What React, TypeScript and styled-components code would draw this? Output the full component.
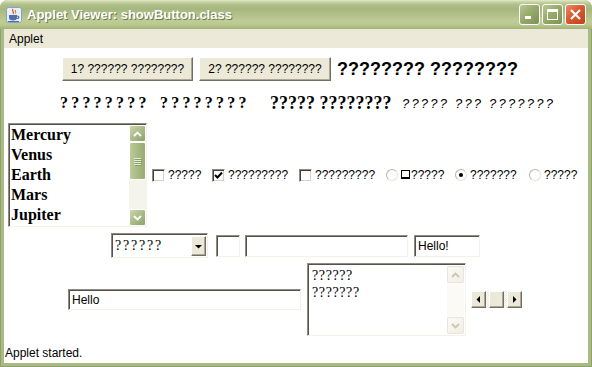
import React from "react";
import styled, { createGlobalStyle } from "styled-components";

const SANS = `"Liberation Sans", Arial, sans-serif`;
const SERIF = `"Liberation Serif", "Times New Roman", serif`;

const GlobalStyle = createGlobalStyle`
  html, body { margin: 0; padding: 0; background: #ffffff; }
  body { width: 592px; height: 367px; overflow: hidden; font-family: ${SANS}; }
  * { box-sizing: border-box; }
`;

const Window = styled.div`
  width: 592px;
  height: 367px;
  display: flex;
  flex-direction: column;
  background: #a8b983;
  border-radius: 8px 8px 0 0;
  overflow: hidden;
`;

const TitleBar = styled.div`
  height: 29px;
  flex: none;
  display: flex;
  align-items: center;
  padding: 0 6px 0 6px;
  background: linear-gradient(
    to bottom,
    #e4ebca 0px,
    #c6d2a2 2px,
    #aebe88 5px,
    #a6b77e 9px,
    #b1c18a 15px,
    #becc96 21px,
    #bac890 25px,
    #a0b277 29px
  );
`;

const TitleText = styled.span`
  margin-left: 5px;
  color: #ffffff;
  font: bold 13px ${SANS};
  text-shadow: 1px 1px 0 #6d7d4a;
  white-space: nowrap;
`;

const CaptionGroup = styled.div`
  margin-left: auto;
  display: flex;
  gap: 2px;
`;

const CaptionButton = styled.div<{ $close?: boolean }>`
  width: 21px;
  height: 21px;
  border: 1px solid #ffffff;
  border-radius: 3px;
  display: flex;
  align-items: center;
  justify-content: center;
  background: ${(p) =>
    p.$close
      ? "linear-gradient(135deg, #ec8a66 0%, #d8592f 45%, #c2431c 100%)"
      : "linear-gradient(135deg, #b8c794 0%, #98aa6d 45%, #7e9254 100%)"};
`;

const Frame = styled.div`
  flex: 1;
  display: flex;
  flex-direction: column;
  padding: 0 4px 4px 4px;
  background: #a9ba85;
  box-shadow: inset 1px 0 0 #8fa268, inset -1px 0 0 #8fa268, inset 0 -1px 0 #8fa268;
`;

const MenuBar = styled.div`
  height: 19px;
  flex: none;
  display: flex;
  align-items: center;
  padding-left: 5px;
  background: #ece9d8;
  font: 12px ${SANS};
  color: #000;
`;

const Content = styled.div`
  flex: 1;
  display: flex;
  flex-direction: column;
  background: #ffffff;
`;

const Row = styled.div<{ $top: number; $left: number; $h: number }>`
  display: flex;
  align-items: center;
  flex: none;
  margin-top: ${(p) => p.$top}px;
  padding-left: ${(p) => p.$left}px;
  height: ${(p) => p.$h}px;
`;

const PushButton = styled.div<{ $w: number; $ml?: number }>`
  width: ${(p) => p.$w}px;
  height: 24px;
  margin-left: ${(p) => p.$ml ?? 0}px;
  display: flex;
  align-items: center;
  justify-content: center;
  background: #ece9d8;
  border-style: solid;
  border-width: 1px;
  border-color: #ffffff #716f64 #716f64 #ffffff;
  box-shadow: inset -1px -1px 0 #aca899;
  font: 12px ${SANS};
  color: #000;
  white-space: nowrap;
`;

const BigLabel = styled.span<{ $ml: number }>`
  margin-left: ${(p) => p.$ml}px;
  font: bold 18px ${SANS};
  color: #000;
  white-space: nowrap;
`;

const SerifLabel = styled.span<{ $w: number; $spaced?: boolean }>`
  width: ${(p) => p.$w}px;
  flex: none;
  font: bold ${(p) => (p.$spaced ? 16 : 18)}px ${SERIF};
  letter-spacing: ${(p) => (p.$spaced ? 3.2 : 0)}px;
  color: #000;
  white-space: nowrap;
`;

const ItalicLabel = styled.span`
  font: italic 13px ${SANS};
  letter-spacing: 2.2px;
  color: #000;
  white-space: nowrap;
`;

const sunken = `
  border-style: solid;
  border-width: 1px;
  border-color: #8e8c80 #f3f1e8 #f3f1e8 #8e8c80;
  box-shadow: inset 1px 1px 0 #55534b;
  background: #ffffff;
`;

const ListBox = styled.div`
  width: 139px;
  height: 104px;
  flex: none;
  display: flex;
  ${sunken}
  padding: 1px 0 0 1px;
`;

const ListItems = styled.div`
  flex: 1;
  display: flex;
  flex-direction: column;
  padding-left: 1px;
`;

const ListItem = styled.div`
  height: 20px;
  font: bold 16px/20px ${SERIF};
  color: #000;
`;

const VScroll = styled.div`
  width: 17px;
  display: flex;
  flex-direction: column;
  background: #f5f4ea;
`;

const OliveButton = styled.div`
  width: 17px;
  height: 17px;
  flex: none;
  border: 1px solid #ffffff;
  border-radius: 2px;
  background: linear-gradient(135deg, #c9d5aa 0%, #a8b986 55%, #8ea266 100%);
  display: flex;
  align-items: center;
  justify-content: center;
`;

const VTrack = styled.div`
  flex: 1;
  display: flex;
  flex-direction: column;
`;

const OliveThumb = styled.div`
  height: 38px;
  border: 1px solid #ffffff;
  border-radius: 2px;
  background: linear-gradient(to right, #bccb98 0%, #a9ba85 50%, #98ab72 100%);
  display: flex;
  flex-direction: column;
  align-items: center;
  justify-content: center;
  gap: 1px;
`;

const Grip = styled.div`
  width: 7px;
  height: 1px;
  background: #e6ecd6;
  box-shadow: 1px 1px 0 #8a9d63;
`;

const CheckItem = styled.div<{ $w: number; $ml?: number }>`
  width: ${(p) => p.$w}px;
  margin-left: ${(p) => p.$ml ?? 0}px;
  flex: none;
  display: flex;
  align-items: center;
  gap: 3px;
  font: 12px ${SANS};
  color: #000;
  white-space: nowrap;
`;

const CheckBox = styled.div`
  width: 13px;
  height: 13px;
  flex: none;
  border-style: solid;
  border-width: 1px;
  border-color: #8e8c80 #ffffff #ffffff #8e8c80;
  box-shadow: inset 1px 1px 0 #404040, inset -1px -1px 0 #d4d0c8;
  background: #ffffff;
  display: flex;
  align-items: center;
  justify-content: center;
`;

const Radio = styled.div`
  width: 12px;
  height: 12px;
  flex: none;
  border-radius: 50%;
  border: 1px solid #b7b4a8;
  border-right-color: #e6e4dc;
  border-bottom-color: #e6e4dc;
  background: #ffffff;
  display: flex;
  align-items: center;
  justify-content: center;
`;

const RadioDot = styled.div`
  width: 4px;
  height: 4px;
  border-radius: 50%;
  background: #000;
`;

const BoxGlyph = styled.span`
  display: inline-block;
  width: 9px;
  height: 9px;
  border: 1px solid #000;
  border-bottom-width: 2px;
  margin-right: 1px;
`;

const Choice = styled.div`
  width: 97px;
  height: 25px;
  flex: none;
  display: flex;
  align-items: center;
  ${sunken}
  padding: 2px 1px 1px 2px;
`;

const ChoiceText = styled.span`
  flex: 1;
  padding-left: 1px;
  font: 14px ${SERIF};
  letter-spacing: 1.8px;
  color: #000;
`;

const ClassicButton = styled.div<{ $w: number; $h: number }>`
  width: ${(p) => p.$w}px;
  height: ${(p) => p.$h}px;
  flex: none;
  background: #ece9d8;
  border-style: solid;
  border-width: 1px;
  border-color: #ffffff #716f64 #716f64 #ffffff;
  box-shadow: inset -1px -1px 0 #aca899;
  display: flex;
  align-items: center;
  justify-content: center;
`;

const TextField = styled.div<{ $w: number; $h: number; $ml?: number }>`
  width: ${(p) => p.$w}px;
  height: ${(p) => p.$h}px;
  margin-left: ${(p) => p.$ml ?? 0}px;
  flex: none;
  ${sunken}
  display: flex;
  align-items: center;
  padding-left: 3px;
  font: 12px ${SANS};
  color: #000;
`;

const TextArea = styled.div<{ $ml: number }>`
  width: 159px;
  height: 73px;
  margin-left: ${(p) => p.$ml}px;
  flex: none;
  ${sunken}
  display: flex;
  padding: 2px 1px 1px 2px;
`;

const AreaText = styled.div`
  flex: 1;
  padding: 1px 0 0 2px;
  font: 14px/17px ${SERIF};
  letter-spacing: 0.6px;
  color: #000;
`;

const PaleScroll = styled.div`
  width: 17px;
  display: flex;
  flex-direction: column;
  justify-content: space-between;
  background: #fbfaf6;
`;

const PaleButton = styled.div`
  width: 17px;
  height: 17px;
  border: 1px solid #e8e6dc;
  border-radius: 2px;
  background: linear-gradient(135deg, #fbfaf6 0%, #f0eee4 100%);
  display: flex;
  align-items: center;
  justify-content: center;
`;

const HScroll = styled.div<{ $ml: number }>`
  width: 51px;
  height: 17px;
  margin-left: ${(p) => p.$ml}px;
  flex: none;
  display: flex;
  background: #eeede5;
`;

const HTrack = styled.div`
  flex: 1;
  display: flex;
  justify-content: center;
  background: repeating-conic-gradient(#ffffff 0% 25%, #ece9d8 0% 50%) 0 0 / 2px 2px;
`;

const Status = styled.div`
  margin-top: 9px;
  height: 16px;
  display: flex;
  align-items: center;
  padding-left: 1px;
  font: 12px ${SANS};
  color: #000;
`;

const JavaIcon = () => (
  <svg width="16" height="16" viewBox="0 0 16 16">
    <rect x="0.5" y="0.5" width="15" height="15" rx="2" fill="#e9eff7" stroke="#8aa1c4" />
    <path d="M7 2 C5 4 9 5 7 7" stroke="#e2561e" strokeWidth="1.3" fill="none" />
    <path d="M9.5 3 C8.5 4.5 10.5 5 9.5 6.5" stroke="#e2561e" strokeWidth="1" fill="none" />
    <path d="M3 8 H11 V11 C11 12.5 9.5 13.5 7 13.5 C4.5 13.5 3 12.5 3 11 Z" fill="#4f6fa8" />
    <path d="M11 9 C13.5 9 13.5 11.5 11 11.5" stroke="#4f6fa8" strokeWidth="1.2" fill="none" />
    <rect x="2" y="14" width="11" height="1" fill="#4f6fa8" />
  </svg>
);

const Chevron = ({ dir, color }: { dir: "up" | "down"; color: string }) => (
  <svg width="9" height="6" viewBox="0 0 9 6">
    <path
      d={dir === "up" ? "M1 5 L4.5 1.5 L8 5" : "M1 1 L4.5 4.5 L8 1"}
      stroke={color}
      strokeWidth="1.8"
      fill="none"
    />
  </svg>
);

const Tri = ({ dir }: { dir: "down" | "left" | "right" }) => (
  <svg width="7" height="7" viewBox="0 0 7 7">
    <path
      d={
        dir === "down"
          ? "M0 2 H7 L3.5 5.5 Z"
          : dir === "left"
          ? "M5 0 V7 L1.5 3.5 Z"
          : "M2 0 V7 L5.5 3.5 Z"
      }
      fill="#000"
    />
  </svg>
);

export default function App() {
  return (
    <>
      <GlobalStyle />
      <Window>
        <TitleBar>
          <JavaIcon />
          <TitleText>Applet Viewer: showButton.class</TitleText>
          <CaptionGroup>
            <CaptionButton>
              <svg width="13" height="13" viewBox="0 0 13 13">
                <rect x="2" y="8" width="6" height="3" fill="#fff" />
              </svg>
            </CaptionButton>
            <CaptionButton>
              <svg width="13" height="13" viewBox="0 0 13 13">
                <rect x="1.5" y="1.5" width="10" height="10" fill="none" stroke="#fff" strokeWidth="1" />
                <rect x="1" y="1" width="11" height="3" fill="#fff" />
              </svg>
            </CaptionButton>
            <CaptionButton $close>
              <svg width="13" height="13" viewBox="0 0 13 13">
                <path d="M2 2 L11 11 M11 2 L2 11" stroke="#fff" strokeWidth="2.2" />
              </svg>
            </CaptionButton>
          </CaptionGroup>
        </TitleBar>
        <Frame>
          <MenuBar>Applet</MenuBar>
          <Content>
            <Row $top={9} $left={58} $h={24}>
              <PushButton $w={131}>1? ?????? ????????</PushButton>
              <PushButton $w={132} $ml={6}>
                2? ?????? ????????
              </PushButton>
              <BigLabel $ml={6}>???????? ????????</BigLabel>
            </Row>
            <Row $top={10} $left={56} $h={24}>
              <SerifLabel $w={100} $spaced>
                ????????
              </SerifLabel>
              <SerifLabel $w={110} $spaced>
                ????????
              </SerifLabel>
              <SerifLabel $w={132}>????? ????????</SerifLabel>
              <ItalicLabel>????? ??? ???????</ItalicLabel>
            </Row>
            <Row $top={8} $left={4} $h={104}>
              <ListBox>
                <ListItems>
                  <ListItem>Mercury</ListItem>
                  <ListItem>Venus</ListItem>
                  <ListItem>Earth</ListItem>
                  <ListItem>Mars</ListItem>
                  <ListItem>Jupiter</ListItem>
                </ListItems>
                <VScroll>
                  <OliveButton>
                    <Chevron dir="up" color="#ffffff" />
                  </OliveButton>
                  <VTrack>
                    <OliveThumb>
                      <Grip />
                      <Grip />
                      <Grip />
                      <Grip />
                    </OliveThumb>
                  </VTrack>
                  <OliveButton>
                    <Chevron dir="down" color="#ffffff" />
                  </OliveButton>
                </VScroll>
              </ListBox>
              <CheckItem $w={60} $ml={5}>
                <CheckBox />
                ?????
              </CheckItem>
              <CheckItem $w={87}>
                <CheckBox>
                  <svg width="9" height="9" viewBox="0 0 9 9">
                    <path d="M1 4 L3.5 6.5 L8 1.5" stroke="#000" strokeWidth="2" fill="none" />
                  </svg>
                </CheckBox>
                ?????????
              </CheckItem>
              <CheckItem $w={87}>
                <CheckBox />
                ?????????
              </CheckItem>
              <CheckItem $w={69}>
                <Radio />
                <span>
                  <BoxGlyph />
                  ?????
                </span>
              </CheckItem>
              <CheckItem $w={74}>
                <Radio>
                  <RadioDot />
                </Radio>
                ???????
              </CheckItem>
              <CheckItem $w={55}>
                <Radio />
                ?????
              </CheckItem>
            </Row>
            <Row $top={6} $left={107} $h={25}>
              <Choice>
                <ChoiceText>??????</ChoiceText>
                <ClassicButton $w={15} $h={20}>
                  <Tri dir="down" />
                </ClassicButton>
              </Choice>
              <TextField $w={24} $h={22} $ml={8} />
              <TextField $w={163} $h={22} $ml={5} />
              <TextField $w={66} $h={22} $ml={6}>
                Hello!
              </TextField>
            </Row>
            <Row $top={5} $left={64} $h={73}>
              <TextField $w={233} $h={21}>
                Hello
              </TextField>
              <TextArea $ml={6}>
                <AreaText>
                  ??????
                  <br />
                  ???????
                </AreaText>
                <PaleScroll>
                  <PaleButton>
                    <Chevron dir="up" color="#c9c6b6" />
                  </PaleButton>
                  <PaleButton>
                    <Chevron dir="down" color="#c9c6b6" />
                  </PaleButton>
                </PaleScroll>
              </TextArea>
              <HScroll $ml={5}>
                <ClassicButton $w={15} $h={17}>
                  <Tri dir="left" />
                </ClassicButton>
                <HTrack>
                  <ClassicButton $w={15} $h={17} />
                </HTrack>
                <ClassicButton $w={15} $h={17}>
                  <Tri dir="right" />
                </ClassicButton>
              </HScroll>
            </Row>
            <Status>Applet started.</Status>
          </Content>
        </Frame>
      </Window>
    </>
  );
}
